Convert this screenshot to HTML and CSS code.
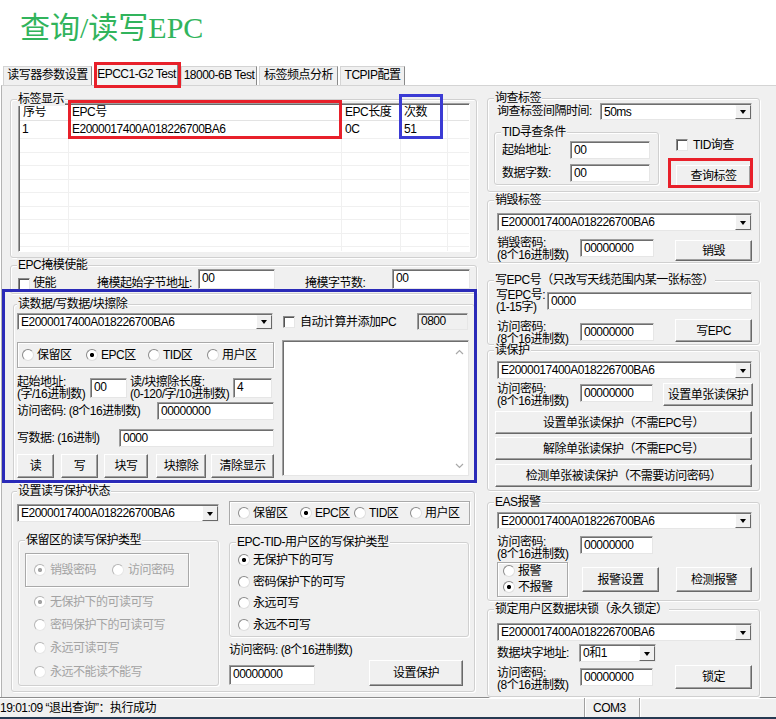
FILE: index.html
```html
<!DOCTYPE html>
<html lang="zh-CN">
<head>
<meta charset="utf-8">
<title>查询/读写EPC</title>
<link rel="stylesheet" href="styles.css">
</head>
<body>
<div class="title">查询/读写EPC</div>
<div class="tabs">
  <div class="tab tw1">读写器参数设置</div>
  <div class="tab sel tw2">EPCC1-G2 Test</div>
  <div class="tab tw3">18000-6B Test</div>
  <div class="tab tw4">标签频点分析</div>
  <div class="tab tw5">TCPIP配置</div>
</div>
<div class="panel">
  <div class="col-left">
    <div class="grp g-tags">
      <span class="lg">标签显示</span>
      <div class="list">
        <div class="lhead">
          <div class="c c1">序号</div><div class="c c2">EPC号</div><div class="c c3">EPC长度</div><div class="c c4">次数</div><div class="c c5"></div>
        </div>
        <div class="lrow r-first">
          <div class="c c1">1</div><div class="c c2">E2000017400A018226700BA6</div><div class="c c3">0C</div><div class="c c4">51</div><div class="c c5"></div>
        </div>
        <div class="lrow"><div class="c c1"></div><div class="c c2"></div><div class="c c3"></div><div class="c c4"></div><div class="c c5"></div></div>
        <div class="lrow"><div class="c c1"></div><div class="c c2"></div><div class="c c3"></div><div class="c c4"></div><div class="c c5"></div></div>
        <div class="lrow"><div class="c c1"></div><div class="c c2"></div><div class="c c3"></div><div class="c c4"></div><div class="c c5"></div></div>
        <div class="lrow"><div class="c c1"></div><div class="c c2"></div><div class="c c3"></div><div class="c c4"></div><div class="c c5"></div></div>
        <div class="lrow"><div class="c c1"></div><div class="c c2"></div><div class="c c3"></div><div class="c c4"></div><div class="c c5"></div></div>
        <div class="lrow"><div class="c c1"></div><div class="c c2"></div><div class="c c3"></div><div class="c c4"></div><div class="c c5"></div></div>
        <div class="lrow"><div class="c c1"></div><div class="c c2"></div><div class="c c3"></div><div class="c c4"></div><div class="c c5"></div></div>
        <div class="lrow"><div class="c c1"></div><div class="c c2"></div><div class="c c3"></div><div class="c c4"></div><div class="c c5"></div></div>
        <div class="lrow r-fill"><div class="c c1"></div><div class="c c2"></div><div class="c c3"></div><div class="c c4"></div><div class="c c5"></div></div>
      </div>
    </div>

    <div class="grp g-mask">
      <span class="lg">EPC掩模使能</span>
      <div class="mrow">
        <span class="cb cb-mask"></span><span class="t m-en">使能</span>
        <span class="t m-l1">掩模起始字节地址:</span><div class="fld m-f1">00</div>
        <span class="t m-l2">掩模字节数:</span><div class="fld m-f2">00</div>
      </div>
    </div>

    <div class="grp g-rw">
      <span class="lg lg-rw">读数据/写数据/块擦除</span>
      <div class="rw-top">
        <div class="combo w256"><div class="v">E2000017400A018226700BA6</div><div class="dd"></div></div>
        <span class="cb cb-pc"></span><span class="t pc-t">自动计算并添加PC</span>
        <div class="fld ro f0800">0800</div>
      </div>
      <div class="rw-body">
        <div class="rw-left">
          <div class="rbox rb-mem">
            <div class="ri m1"><span class="rd"></span>保留区</div>
            <div class="ri m2"><span class="rd on"></span>EPC区</div>
            <div class="ri m3"><span class="rd"></span>TID区</div>
            <div class="ri"><span class="rd"></span>用户区</div>
          </div>
          <div class="addr-row">
            <div class="t2 a-l1">起始地址:<br>(字/16进制数)</div><div class="fld a-f1">00</div>
            <div class="t2 a-l2">读/块擦除长度:<br>(0-120/字/10进制数)</div><div class="fld a-f2">4</div>
          </div>
          <div class="pw-row"><span class="t pw-l">访问密码: (8个16进制数)</span><div class="fld pw-f">00000000</div></div>
          <div class="wd-row"><span class="t wd-l">写数据: (16进制)</span><div class="fld wd-f">0000</div></div>
          <div class="btn-row">
            <div class="btn b-r">读</div>
            <div class="btn b-w">写</div>
            <div class="btn b-bw">块写</div>
            <div class="btn b-be">块擦除</div>
            <div class="btn b-cl">清除显示</div>
          </div>
        </div>
        <div class="memo">
          <div class="sbar">
            <svg width="9" height="6" viewBox="0 0 9 6"><polyline points="1,5 4.5,1.5 8,5" fill="none" stroke="#a9a9a9" stroke-width="1.2"/></svg>
            <svg width="9" height="6" viewBox="0 0 9 6"><polyline points="1,1 4.5,4.5 8,1" fill="none" stroke="#a9a9a9" stroke-width="1.2"/></svg>
          </div>
        </div>
      </div>
    </div>

    <div class="grp g-prot">
      <span class="lg lg-prot">设置读写保护状态</span>
      <div class="p-left">
        <div class="combo w202 p-combo"><div class="v">E2000017400A018226700BA6</div><div class="dd"></div></div>
        <div class="grp sg-res">
          <span class="lg">保留区的读写保护类型</span>
          <div class="rbox rb-pw dis">
            <div class="ri k1"><span class="rd on"></span>销毁密码</div>
            <div class="ri"><span class="rd"></span>访问密码</div>
          </div>
          <div class="rlist dis">
            <div class="ri rl"><span class="rd on"></span>无保护下的可读可写</div>
            <div class="ri rl"><span class="rd"></span>密码保护下的可读可写</div>
            <div class="ri rl"><span class="rd"></span>永远可读可写</div>
            <div class="ri rl"><span class="rd"></span>永远不能读不能写</div>
          </div>
        </div>
      </div>
      <div class="p-right">
        <div class="rbox rb-area">
          <div class="ri z1"><span class="rd"></span>保留区</div>
          <div class="ri z2"><span class="rd on"></span>EPC区</div>
          <div class="ri z3"><span class="rd"></span>TID区</div>
          <div class="ri"><span class="rd"></span>用户区</div>
        </div>
        <div class="grp sg-wp">
          <span class="lg">EPC-TID-用户区的写保护类型</span>
          <div class="ri wl"><span class="rd on"></span>无保护下的可写</div>
          <div class="ri wl"><span class="rd"></span>密码保护下的可写</div>
          <div class="ri wl"><span class="rd"></span>永远可写</div>
          <div class="ri wl"><span class="rd"></span>永远不可写</div>
        </div>
        <div class="t p-pwl">访问密码: (8个16进制数)</div>
        <div class="p-bot">
          <div class="fld p-pwf">00000000</div>
          <div class="btn p-set">设置保护</div>
        </div>
      </div>
    </div>
  </div>

  <div class="col-right">
    <div class="grp g-inv">
      <span class="lg">询查标签</span>
      <div class="row">
        <span class="t inv-l">询查标签间隔时间:</span>
        <div class="combo w152 h17"><div class="v">50ms</div><div class="dd"></div></div>
      </div>
      <div class="row inv-r2">
        <div class="grp sg-tid">
          <span class="lg">TID寻查条件</span>
          <div class="row"><span class="t tid-l">起始地址:</span><div class="fld tid-f">00</div></div>
          <div class="row tid-r2"><span class="t tid-l">数据字数:</span><div class="fld tid-f">00</div></div>
        </div>
        <div class="inv-side">
          <div class="row tidq"><span class="cb"></span><span class="t tidq-t">TID询查</span></div>
          <div class="btn inv-btn">查询标签</div>
        </div>
      </div>
    </div>

    <div class="grp g-kill">
      <span class="lg">销毁标签</span>
      <div class="combo w255"><div class="v">E2000017400A018226700BA6</div><div class="dd"></div></div>
      <div class="row k-row">
        <div class="t2 k-l">销毁密码:<br>(8个16进制数)</div>
        <div class="fld k-f">00000000</div>
        <div class="btn k-b">销毁</div>
      </div>
    </div>

    <div class="grp g-wepc">
      <span class="lg">写EPC号（只改写天线范围内某一张标签）</span>
      <div class="row">
        <div class="t2 we-l">写EPC号:<br>(1-15字)</div>
        <div class="fld we-f">0000</div>
      </div>
      <div class="row we-r2">
        <div class="t2 k-l we-l2">访问密码:<br>(8个16进制数)</div>
        <div class="fld k-f we-f2">00000000</div>
        <div class="btn k-b we-b">写EPC</div>
      </div>
    </div>

    <div class="grp g-rp">
      <span class="lg">读保护</span>
      <div class="combo w255"><div class="v">E2000017400A018226700BA6</div><div class="dd"></div></div>
      <div class="row rp-row">
        <div class="t2 k-l rp-l">访问密码:<br>(8个16进制数)</div>
        <div class="fld k-f rp-f">00000000</div>
        <div class="btn rp-b">设置单张读保护</div>
      </div>
      <div class="btn wide wd1">设置单张读保护（不需EPC号）</div>
      <div class="btn wide wd2">解除单张读保护（不需EPC号）</div>
      <div class="btn wide wd3">检测单张被读保护（不需要访问密码）</div>
    </div>

    <div class="grp g-eas">
      <span class="lg">EAS报警</span>
      <div class="combo w255 h17"><div class="v">E2000017400A018226700BA6</div><div class="dd"></div></div>
      <div class="row eas-row">
        <div class="t2 k-l">访问密码:<br>(8个16进制数)</div>
        <div class="fld k-f">00000000</div>
      </div>
      <div class="row eas-r3">
        <div class="rbox rb-eas">
          <div class="ri ei"><span class="rd"></span>报警</div>
          <div class="ri ei"><span class="rd on"></span>不报警</div>
        </div>
        <div class="btn eas-b1">报警设置</div>
        <div class="btn eas-b2">检测报警</div>
      </div>
    </div>

    <div class="grp g-lock">
      <span class="lg">锁定用户区数据块锁（永久锁定）</span>
      <div class="combo w255"><div class="v">E2000017400A018226700BA6</div><div class="dd"></div></div>
      <div class="row lk-r2">
        <span class="t lk-l">数据块字地址:</span>
        <div class="combo w77"><div class="v">0和1</div><div class="dd"></div></div>
      </div>
      <div class="row lk-r3">
        <div class="t2 k-l lk-l2">访问密码:<br>(8个16进制数)</div>
        <div class="fld k-f lk-f">00000000</div>
        <div class="btn k-b lk-b">锁定</div>
      </div>
    </div>
  </div>
</div>
<div class="status">
  <div class="sp sp1">19:01:09 “退出查询”：执行成功</div>
  <div class="sp sp2">COM3</div>
  <div class="sp sp3"></div>
</div>

<div class="mark red m-tab"></div>
<div class="mark red m-epc"></div>
<div class="mark blue m-cnt"></div>
<div class="mark navy m-rw"></div>
<div class="mark red m-query"></div>
</body>
</html>
```

FILE: styles.css
```css
* { box-sizing: border-box; }
html, body { margin: 0; padding: 0; }
body {
  position: relative;
  width: 776px;
  height: 719px;
  overflow: hidden;
  background: #fff;
  font-family: "Liberation Sans", "Noto Sans CJK SC", sans-serif;
  font-size: 12px;
  line-height: 14px;
  letter-spacing: -0.5px;
  color: #000;
}

/* title */
.title {
  height: 62px;
  padding: 8px 0 0 20px;
  font-family: "Liberation Serif", "Noto Sans CJK SC", serif;
  font-size: 30px;
  line-height: 40px;
  letter-spacing: 0;
  color: #31b45c;
}

/* tabs */
.tabs {
  display: flex;
  align-items: flex-end;
  height: 23px;
  padding-left: 3px;
  position: relative;
  z-index: 2;
}
.tab {
  height: 19px;
  background: #f0f0f0;
  border: 1px solid #d4d4d4;
  border-bottom: none;
  border-right-color: #8a8a8a;
  text-align: center;
  line-height: 17px;
  white-space: nowrap;
}
.tab.sel { height: 23px; margin-bottom: -1px; background: #f4f4f4; line-height: 20px; }
.tw1 { width: 89px; }
.tw2 { width: 83px; margin-left: 3px; }
.tw3 { width: 76px; margin-left: 3px; }
.tw4 { width: 79px; margin-left: 2px; }
.tw5 { width: 65px; margin-left: 2px; }

/* panel */
.panel {
  display: flex;
  height: 612px;
  margin-left: 1px;
  background: #f0f0f0;
  border-top: 1px solid #d4d4d4;
  border-left: 1px solid #b4b4b4;
  padding-left: 8px;
}
.col-left { width: 467px; display: flex; flex-direction: column; }
.col-right { width: 273px; margin-left: 10px; display: flex; flex-direction: column; }

/* group boxes */
.grp {
  position: relative;
  border: 1px solid #d0d0d0;
  border-radius: 3px;
  box-shadow: inset 1px 1px 0 #fff, 1px 1px 0 #fff;
  flex: none;
}
.lg {
  position: absolute;
  left: 6px;
  top: -8px;
  padding: 0 1px;
  background: #f0f0f0;
  line-height: 14px;
  white-space: nowrap;
}
.row { display: flex; flex: none; }
.t { white-space: nowrap; line-height: 14px; }
.t2 { white-space: nowrap; line-height: 12px; flex: none; }

/* fields */
.fld {
  flex: none;
  height: 18px;
  background: #fff;
  border: 1px solid;
  border-color: #9c9c9c #e6e6e6 #e6e6e6 #9c9c9c;
  box-shadow: inset 1px 1px 0 #6e6e6e;
  padding: 1px 0 0 3px;
  line-height: 14px;
  white-space: nowrap;
  overflow: hidden;
}
.fld.ro { background: #f0f0f0; }

.combo {
  flex: none;
  display: flex;
  height: 18px;
  background: #fff;
  border: 1px solid;
  border-color: #9c9c9c #e6e6e6 #e6e6e6 #9c9c9c;
  box-shadow: inset 1px 1px 0 #6e6e6e;
  padding: 1px 0 0 1px;
}
.combo .v { flex: 1; padding-left: 2px; line-height: 14px; white-space: nowrap; overflow: hidden; }
.combo .dd {
  width: 16px;
  background: #f0f0f0;
  border: 1px solid;
  border-color: #f4f4f4 #696969 #696969 #fff;
  display: flex;
  align-items: center;
  justify-content: center;
}
.combo .dd::after {
  content: "";
  border-style: solid;
  border-width: 4px 3.5px 0 3.5px;
  border-color: #000 transparent transparent transparent;
}
.h17 { height: 17px; }
.w256 { width: 256px; }
.w255 { width: 255px; }
.w202 { width: 202px; }
.w152 { width: 152px; }
.w77 { width: 77px; }

/* buttons */
.btn {
  flex: none;
  background: #f0f0f0;
  border: 1px solid;
  border-color: #fff #696969 #696969 #fff;
  box-shadow: inset -1px -1px 0 #a0a0a0;
  display: flex;
  align-items: center;
  justify-content: center;
  white-space: nowrap;
}

/* radios, checkboxes */
.rd {
  flex: none;
  width: 12px;
  height: 12px;
  border-radius: 50%;
  background: #fff;
  border: 1px solid;
  border-color: #8a8a8a #dedede #dedede #8a8a8a;
}
.rd.on { background: radial-gradient(circle, #000 0 1.8px, #fff 2.4px); }
.ri { display: flex; align-items: center; gap: 3px; white-space: nowrap; flex: none; }
.dis { color: #a3a3a3; }
.dis .rd { border-color: #b5b5b5 #e6e6e6 #e6e6e6 #b5b5b5; }
.dis .rd.on { background: radial-gradient(circle, #a3a3a3 0 1.8px, #fff 2.4px); }
.cb {
  flex: none;
  width: 12px;
  height: 12px;
  background: #fff;
  border: 1px solid;
  border-color: #8a8a8a #e6e6e6 #e6e6e6 #8a8a8a;
  box-shadow: inset 1px 1px 0 #555;
}
.rbox {
  flex: none;
  display: flex;
  align-items: center;
  border: 1px solid #a9a9a9;
  box-shadow: inset 1px 1px 0 #fff, 1px 1px 0 #fff;
}

/* tag list */
.g-tags { margin-top: 13px; height: 159px; padding: 3px 0 0 7px; }
.list {
  width: 452px;
  height: 149px;
  background: #fff;
  border: 1px solid;
  border-color: #a0a0a0 #fff #fff #a0a0a0;
  box-shadow: inset 1px 1px 0 #6a6a6a;
  padding: 1px 0 0 1px;
  display: flex;
  flex-direction: column;
}
.lhead { display: flex; height: 16px; border-bottom: 1px solid #e3e3e3; flex: none; }
.lhead .c { border-right: 1px solid #e3e3e3; padding-left: 3px; line-height: 15px; white-space: nowrap; }
.lrow { display: flex; height: 13.5px; border-bottom: 1px solid #f0f0f0; flex: none; }
.lrow .c { border-right: 1px solid #f0f0f0; padding-left: 2px; line-height: 17px; white-space: nowrap; }
.lrow .c2, .lrow .c3, .lrow .c4 { padding-left: 3px; }
.r-first { height: 18px; }
.r-fill { flex: 1; border-bottom: none; }
.c1 { width: 49px; }
.c2 { width: 273px; }
.c3 { width: 59px; }
.c4 { width: 47px; }
.c5 { flex: 1; border-right: none !important; }

/* mask */
.g-mask { margin-top: 7px; height: 29px; padding: 3px 0 0 7px; }
.mrow { display: flex; align-items: flex-start; height: 20px; }
.cb-mask { margin-top: 9px; }
.m-en { margin: 7px 0 0 3px; width: 24px; }
.m-l1 { margin: 7px 0 0 40px; width: 101px; }
.m-f1 { width: 77px; height: 20px; }
.m-l2 { margin: 7px 0 0 30px; width: 87px; }
.m-f2 { width: 78px; height: 20px; }

/* read / write */
.g-rw { margin: 10px 0 0 3px; width: 462px; height: 179px; padding: 8px 0 0 3px; }
.lg-rw { left: 3px; }
.rw-top { display: flex; align-items: center; height: 18px; }
.rw-top .combo { height: 17px; align-self: flex-start; }
.cb-pc { margin-left: 10px; }
.pc-t { margin-left: 5px; width: 117px; }
.f0800 { width: 51px; height: 17px; align-self: flex-start; padding-top: 0; }
.rw-body { display: flex; margin-top: 9px; }
.rw-left { width: 257px; padding-top: 2px; display: flex; flex-direction: column; }
.rb-mem { width: 257px; height: 26px; padding-left: 4px; }
.m1 { width: 64px; }
.m2 { width: 62px; }
.m3 { width: 59px; }
.addr-row { display: flex; margin-top: 9px; height: 21px; }
.a-l1 { width: 73px; margin-top: -1px; }
.a-f1 { width: 37px; height: 20px; margin-top: 1px; }
.a-l2 { width: 103px; margin: -1px 0 0 3px; }
.a-f2 { width: 39px; height: 20px; margin-top: 1px; }
.pw-row { display: flex; align-items: center; margin-top: 4px; }
.pw-l { width: 140px; }
.pw-f { width: 117px; }
.wd-row { display: flex; align-items: center; margin-top: 9px; }
.wd-l { width: 102px; }
.wd-f { width: 155px; }
.btn-row { display: flex; margin-top: 7px; height: 24px; }
.b-r { width: 37px; }
.b-w { width: 37px; margin-left: 7px; }
.b-bw { width: 44px; margin-left: 6px; }
.b-be { width: 50px; margin-left: 8px; }
.b-cl { width: 63px; margin-left: 5px; }
.memo {
  width: 187px;
  height: 136px;
  margin-left: 8px;
  background: #fff;
  border: 1px solid;
  border-color: #a0a0a0 #e6e6e6 #e6e6e6 #a0a0a0;
  box-shadow: inset 1px 1px 0 #6e6e6e;
  display: flex;
  justify-content: flex-end;
}
.sbar {
  width: 18px;
  display: flex;
  flex-direction: column;
  justify-content: space-between;
  align-items: center;
  padding: 8px 0 6px;
}

/* protection */
.g-prot { margin: 8px 0 0 1px; width: 464px; height: 201px; padding: 9px 0 0 5px; display: flex; }
.lg-prot { left: 5px; }
.p-left { width: 202px; display: flex; flex-direction: column; }
.p-combo { margin-top: 3px; }
.sg-res { margin: 18px 0 0 1px; width: 201px; height: 146px; padding: 12px 0 0 6px; }
.rb-pw { width: 164px; height: 34px; padding-left: 8px; }
.k1 { width: 78px; gap: 4px; }
.rb-pw .ri { gap: 4px; }
.rlist { margin: 3px 0 0 9px; display: flex; flex-direction: column; }
.rl { height: 23.3px; gap: 4px; }
.p-right { width: 241px; margin-left: 10px; display: flex; flex-direction: column; }
.rb-area { width: 241px; height: 24px; padding-left: 8px; }
.z1 { width: 62px; }
.z2 { width: 54px; }
.z3 { width: 56px; }
.sg-wp { margin-top: 17px; width: 240px; height: 95px; padding: 6px 0 0 8px; }
.wl { height: 21.7px; }
.p-pwl { margin-top: 6px; }
.p-bot { display: flex; align-items: flex-end; margin-top: 3px; height: 26px; }
.p-pwf { width: 86px; height: 20px; margin-bottom: 1px; }
.p-set { width: 94px; height: 26px; margin-left: 54px; }

/* right column */
.g-inv { margin-top: 12px; height: 94px; padding: 4px 0 0 9px; }
.inv-l { width: 103px; line-height: 17px; }
.inv-r2 { margin-top: 12px; }
.sg-tid { margin-left: -3px; width: 165px; height: 53px; padding: 8px 0 0 7px; }
.tid-l { width: 68px; line-height: 18px; }
.tid-f { width: 80px; }
.tid-r2 { margin-top: 5px; }
.inv-side { margin-left: 17px; display: flex; flex-direction: column; }
.tidq { margin-top: 6px; align-items: center; }
.tidq-t { margin-left: 5px; }
.inv-btn { margin-top: 13px; width: 75px; height: 22px; }

.g-kill { margin-top: 8px; height: 63px; padding: 12px 0 0 9px; }
.k-row { margin-top: 6px; }
.k-l { width: 83px; }
.k-f { width: 74px; margin-top: 2px; }
.k-b { width: 77px; height: 21px; margin: 3px 0 0 21px; }

.g-wepc { margin-top: 17px; height: 65px; padding: 11px 0 0 8px; }
.we-l { width: 51px; margin-top: -3px; height: 24px; }
.we-f { width: 205px; }
.we-r2 { margin-top: 6px; }
.we-l2 { margin: 2px 0 0 1px; }
.we-f2 { margin-top: 4px; }
.we-b { height: 23px; margin-top: 0; }

.g-rp { margin-top: 5px; height: 141px; padding: 10px 0 0 9px; }
.rp-row { margin-top: 4px; }
.rp-l { margin-top: 0; }
.rp-f { width: 73px; margin-top: 1px; }
.rp-b { width: 90px; height: 23px; margin-left: 10px; }
.wide { width: 257px; height: 23px; margin-left: -2px; }
.wd1 { margin-top: 4px; }
.wd2 { margin-top: 3px; }
.wd3 { margin-top: 4px; }

.g-eas { margin-top: 11px; height: 99px; padding: 9px 0 0 9px; }
.eas-row { margin-top: 7px; height: 22px; }
.eas-row .k-f { margin-top: 0; width: 73px; }
.eas-r3 { margin-top: 4px; }
.rb-eas { width: 71px; height: 35px; flex-direction: column; align-items: flex-start; padding-left: 5px; }
.ei { height: 16px; }
.eas-b1 { width: 77px; height: 25px; margin: 5px 0 0 14px; }
.eas-b2 { width: 76px; height: 25px; margin: 5px 0 0 17px; }

.g-lock { margin-top: 8px; height: 88px; padding: 13px 0 0 9px; }
.lk-r2 { margin-top: 3px; }
.lk-l { width: 82px; line-height: 18px; }
.lk-r3 { margin-top: 3px; }
.lk-l2 { margin-top: 2px; }
.lk-f { width: 73px; margin-top: 3px; }
.lk-b { height: 24px; margin: 0 0 0 22px; }

/* status bar */
.status {
  display: flex;
  height: 22px;
  background: #f0f0f0;
  border-top: 1px solid #8c8c8c;
  box-shadow: inset 0 1px 0 #fff;
  border-bottom: 2px solid #263a52;
}
.sp { line-height: 19px; white-space: nowrap; padding-top: 1px; }
.sp1 { width: 585px; border-right: 1px solid #a0a0a0; }
.sp2 { width: 55px; padding-left: 7px; border-right: 1px solid #a0a0a0; border-left: 1px solid #fff; }
.sp3 { flex: 1; border-left: 1px solid #fff; }

/* annotation marks */
.mark { position: absolute; border: 3px solid; pointer-events: none; z-index: 5; }
.red { border-color: #e8202a; }
.blue { border-color: #3b3bd4; }
.navy { border-color: #2a2ab8; }
.m-tab { left: 94px; top: 62px; width: 87px; height: 26px; }
.m-epc { left: 68px; top: 100px; width: 274px; height: 39px; }
.m-cnt { left: 399px; top: 94px; width: 44px; height: 45px; }
.m-rw { left: 2px; top: 289px; width: 475px; height: 194px; }
.m-query { left: 668px; top: 158px; width: 85px; height: 30px; }
```
